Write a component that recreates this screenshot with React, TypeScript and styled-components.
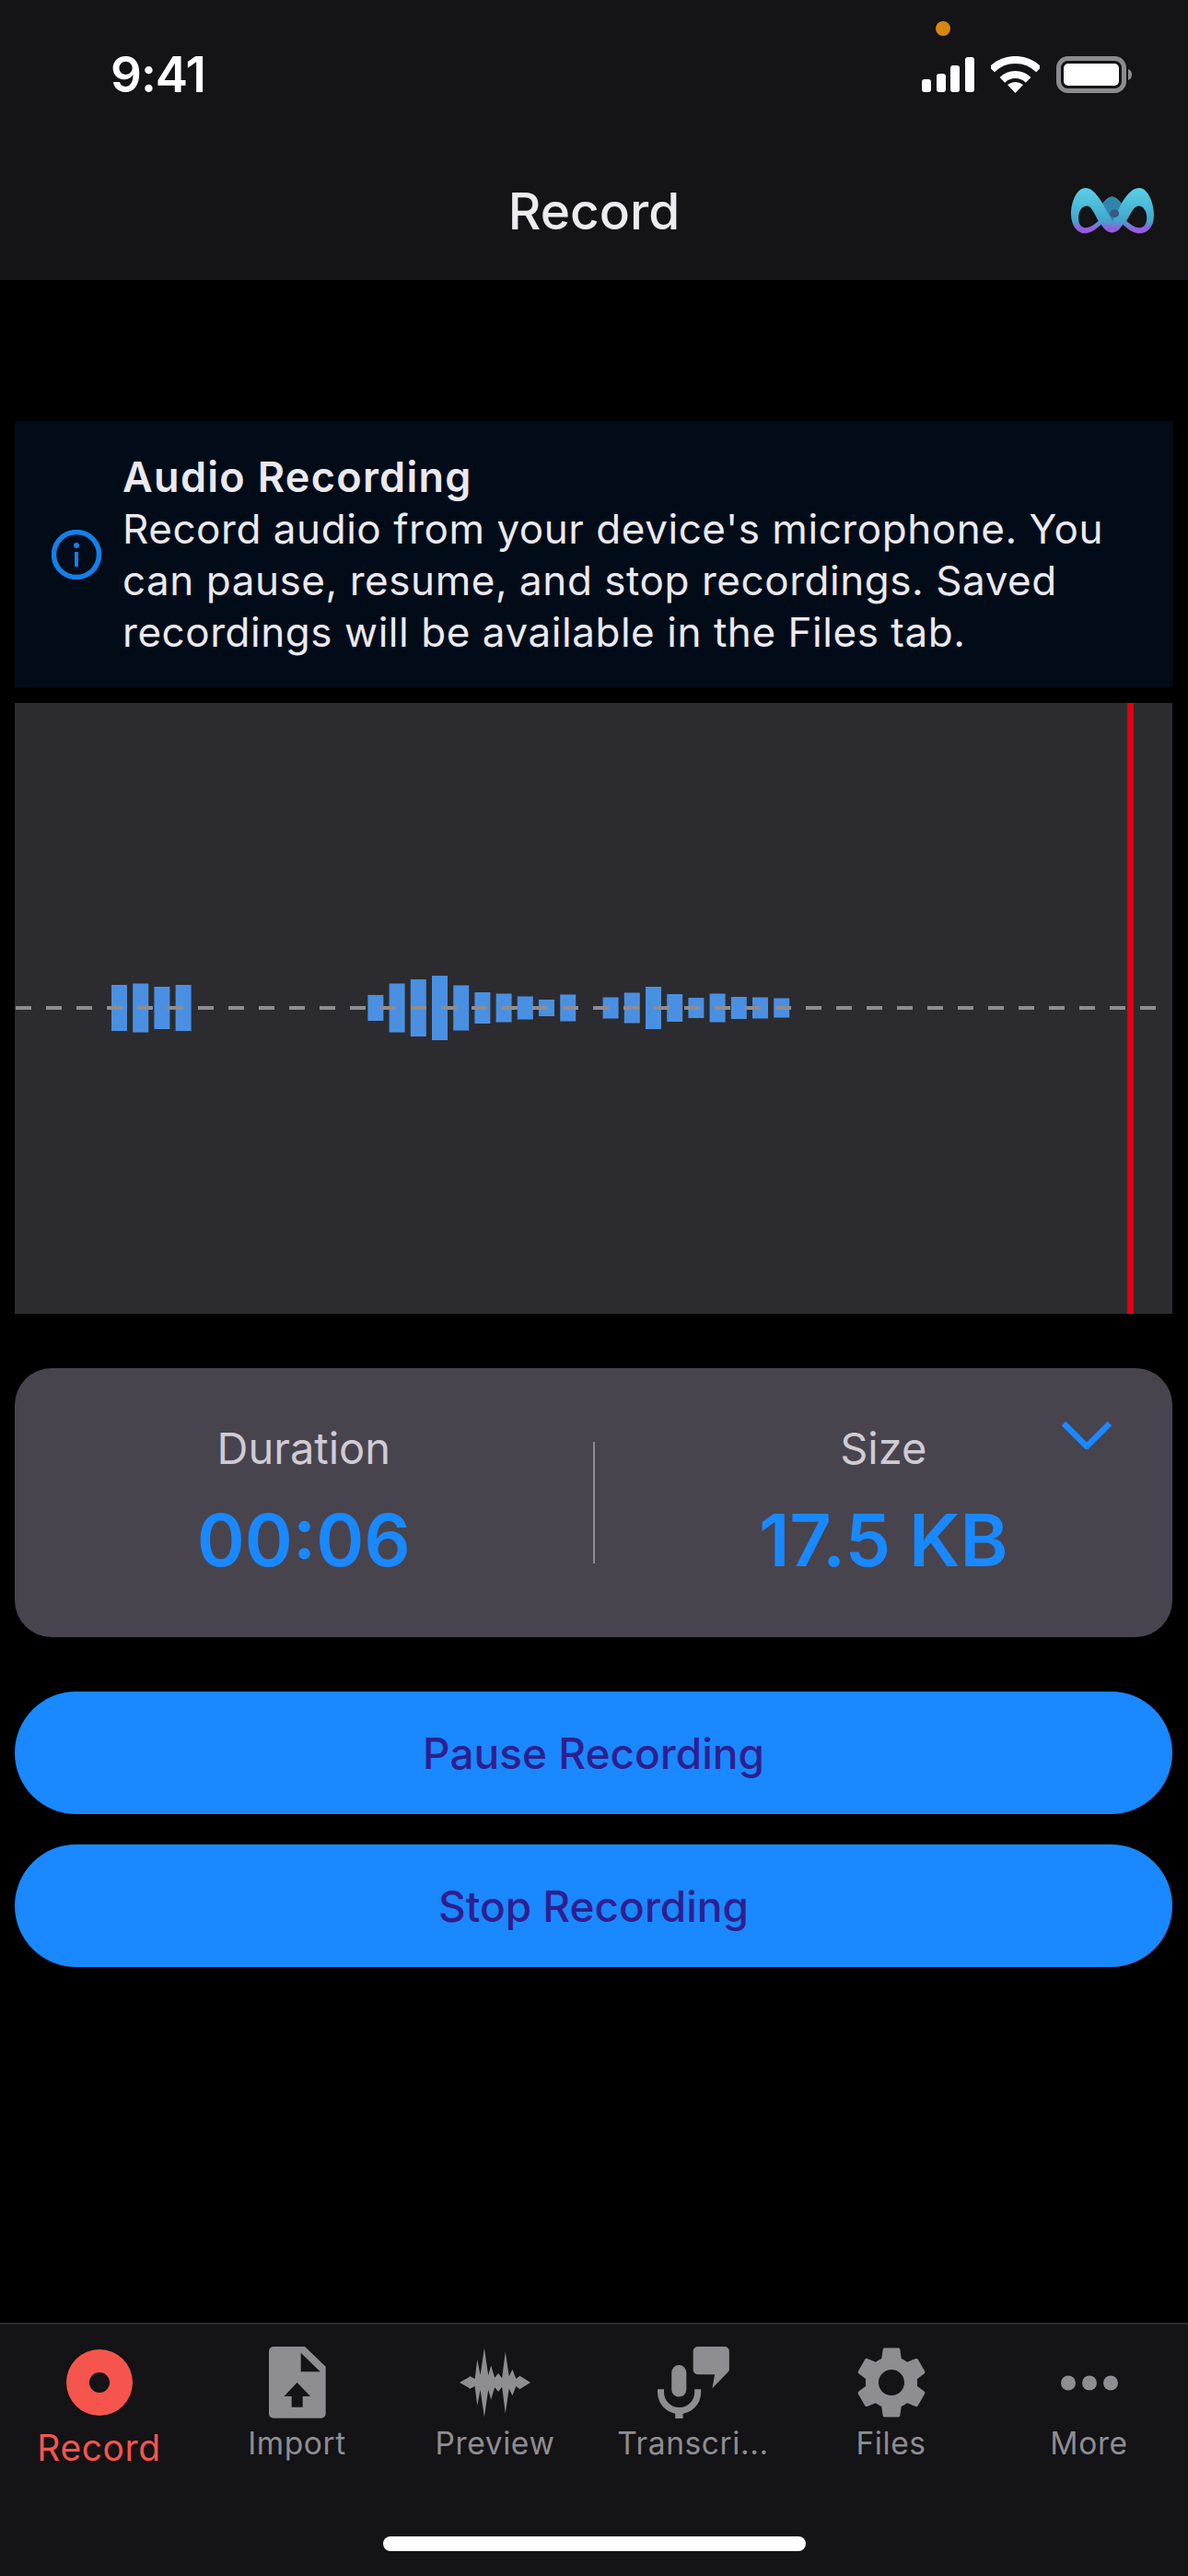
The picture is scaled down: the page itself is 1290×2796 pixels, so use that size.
import React from "react"
import styled, { createGlobalStyle } from "styled-components"

const GlobalStyle = createGlobalStyle`
    html,
    body {
        margin: 0;
        padding: 0;
        background: #000;
    }
`

const Screen = styled.div`
    width: 1290px;
    height: 2796px;
    display: flex;
    flex-direction: column;
    background: #000;
    font-family: Inter, "Liberation Sans", sans-serif;
    overflow: hidden;
`

const Header = styled.header`
    position: relative;
    height: 304px;
    flex-shrink: 0;
    background: #141316;
    display: flex;
    flex-direction: column;
`

const StatusBar = styled.div`
    display: flex;
    justify-content: space-between;
    align-items: center;
    height: 40px;
    margin-top: 61px;
    padding: 0 61px 0 120px;
`

const Clock = styled.span`
    color: #fff;
    font-size: 53px;
    font-weight: 600;
    letter-spacing: -1px;
    line-height: 40px;
`

const StatusIcons = styled.div`
    display: flex;
    align-items: center;
    gap: 18px;
`

const PrivacyDot = styled.span`
    position: absolute;
    left: 1016px;
    top: 23px;
    width: 16px;
    height: 16px;
    border-radius: 50%;
    background: #d9860f;
`

const TitleRow = styled.div`
    display: grid;
    grid-template-columns: 1fr auto 1fr;
    align-items: center;
    height: 60px;
    margin-top: 98px;
    padding: 0 37px;
`

const Title = styled.h1`
    grid-column: 2;
    margin: 0;
    color: #ebebf0;
    font-size: 55px;
    font-weight: 500;
    line-height: 60px;
`

const LogoSlot = styled.div`
    justify-self: end;
    display: flex;
`

const Content = styled.main`
    display: flex;
    flex-direction: column;
    padding: 153px 17px 0 16px;
`

const InfoBox = styled.section`
    height: 289px;
    background: #020c19;
    display: flex;
    align-items: center;
    gap: 23px;
    padding-left: 40px;
    box-sizing: border-box;
`

const InfoText = styled.div`
    color: #ebe9f0;
    font-size: 44px;
    line-height: 56px;
    letter-spacing: 0.55px;
`

const InfoTitle = styled.div`
    font-size: 45px;
    font-weight: 600;
    letter-spacing: 1.3px;
`

const WavePanel = styled.section`
    margin-top: 17px;
    height: 663px;
    background: #2c2c30;
    display: flex;
`

const StatsCard = styled.section`
    position: relative;
    margin-top: 59px;
    height: 292px;
    border-radius: 40px;
    background: #48444e;
    display: grid;
    grid-template-columns: 1fr 2px 1fr;
    align-items: center;
`

const Stat = styled.div`
    display: flex;
    flex-direction: column;
    align-items: center;
    gap: 30px;
    padding-bottom: 4px;
`

const StatLabel = styled.div`
    color: #cfcbd3;
    font-size: 47px;
    line-height: 54px;
`

const StatValue = styled.div`
    color: #1a88ff;
    font-size: 79px;
    font-weight: 600;
    line-height: 84px;
`

const Divider = styled.div`
    height: 132px;
    background: #8f8b94;
`

const ChevronButton = styled.div`
    position: absolute;
    right: 66px;
    top: 58px;
    display: flex;
`

const Actions = styled.div`
    margin-top: 59px;
    display: flex;
    flex-direction: column;
    gap: 33px;
`

const ActionButton = styled.div`
    height: 133px;
    border-radius: 67px;
    background: #1a88ff;
    color: #2e1f8f;
    font-size: 46px;
    font-weight: 500;
    display: flex;
    align-items: center;
    justify-content: center;
`

const TabBar = styled.nav`
    margin-top: auto;
    height: 275px;
    box-sizing: border-box;
    border-top: 2px solid #2a2a2c;
    background: #141316;
    display: flex;
    flex-direction: column;
`

const Tabs = styled.div`
    display: grid;
    grid-template-columns: repeat(6, 1fr);
    padding-top: 24px;
`

const Tab = styled.div`
    display: flex;
    flex-direction: column;
    align-items: center;
`

const TabIcon = styled.div`
    height: 78px;
    display: flex;
    align-items: center;
    justify-content: center;
`

const TabLabel = styled.div<{ $active?: boolean }>`
    color: ${props => (props.$active ? "#f5554d" : "#8e8d92")};
    font-size: ${props => (props.$active ? "39px" : "33.5px")};
    line-height: 40px;
    margin-top: ${props => (props.$active ? "12px" : "7px")};
    letter-spacing: 0.6px;
    white-space: nowrap;
`

const HomeIndicator = styled.div`
    width: 459px;
    height: 16px;
    border-radius: 8px;
    background: #fff;
    margin: auto auto 27px;
`

const BAR_HEIGHTS = [
    50, 53, 46, 50, 0, 0, 0, 0, 0, 0, 0, 0, 28, 53, 62, 70, 49, 34, 31, 25, 18, 29, 0, 23, 33, 46,
    30, 22, 31, 24, 23, 21,
]

const Waveform = () => (
    <svg width="1257" height="663" viewBox="0 0 1257 663">
        {BAR_HEIGHTS.map((h, i) =>
            h > 0 ? <rect key={i} x={105 + i * 23.2} y={331 - h / 2} width="17" height={h} fill="#4a90e2" /> : null
        )}
        <line x1="1" y1="331" x2="1241" y2="331" stroke="#8d8d92" strokeWidth="4" strokeDasharray="17 16" />
        <rect x="1208" y="0" width="7" height="663" fill="#e0000f" />
    </svg>
)

const SignalIcon = () => (
    <svg width="57" height="38" viewBox="0 0 57 38" fill="#fff">
        <rect x="0" y="24" width="10" height="14" rx="3" />
        <rect x="16" y="18" width="10" height="20" rx="3" />
        <rect x="31" y="9" width="10" height="29" rx="3" />
        <rect x="47" y="0" width="10" height="38" rx="3" />
    </svg>
)

const WifiIcon = () => (
    <svg width="53" height="40" viewBox="0 0 53 40" fill="none" stroke="#fff" strokeWidth="8">
        <path d="M1 14.5A36 36 0 0 1 52 14.5" />
        <path d="M12.4 25.9A20 20 0 0 1 40.6 25.9" />
        <path d="M18 31Q26.5 25 35 31L26.5 40Z" fill="#fff" stroke="none" />
    </svg>
)

const BatteryIcon = () => (
    <svg width="82" height="40" viewBox="0 0 82 40">
        <rect x="2.5" y="2.5" width="71" height="35" rx="10" fill="none" stroke="#8c8c8e" strokeWidth="5" />
        <rect x="8" y="8" width="60" height="24" rx="5" fill="#fff" />
        <path d="M78 14C81 15 82 17 82 20S81 25 78 26Z" fill="#8c8c8e" />
    </svg>
)

const Logo = () => (
    <svg width="90" height="50" viewBox="38 42 267 148">
        <defs>
            <linearGradient id="logoFill" x1="0" y1="0" x2="0" y2="1">
                <stop offset="0" stopColor="#5ad0e6" />
                <stop offset="0.72" stopColor="#41a6cc" />
                <stop offset="0.88" stopColor="#8a66dc" />
                <stop offset="1" stopColor="#a552e4" />
            </linearGradient>
        </defs>
        <path
            fill="url(#logoFill)"
            fillRule="evenodd"
            d="M85 42C108 42 124 68 140 92C150 78 160 70 170 70C180 70 190 78 200 92C216 68 232 42 258 42C285 42 305 90 305 130C305 170 282 190 255 188C234 186 218 172 205 160C195 175 185 186 170 186C155 186 145 175 135 160C122 172 106 186 85 188C60 190 38 165 38 125C38 90 55 42 85 42ZM90 100C72 100 62 118 62 138C62 158 72 170 84 170C100 170 116 158 126 148C114 128 104 100 90 100ZM255 100C240 100 230 128 216 148C228 158 242 170 258 170C272 170 282 158 282 138C282 118 272 100 255 100Z"
        />
        <path d="M140 92C150 78 160 70 170 70C180 70 190 78 200 92L172 150Z" fill="#2f86ad" />
        <ellipse cx="178" cy="124" rx="15" ry="13" fill="#3a5a7e" />
    </svg>
)

const InfoIcon = () => (
    <svg width="54" height="54" viewBox="0 0 54 54" fill="none">
        <circle cx="27" cy="27" r="24.5" stroke="#1580e8" strokeWidth="5.5" />
        <circle cx="27" cy="17" r="3" fill="#1580e8" />
        <rect x="25" y="24" width="4" height="16" fill="#1580e8" />
    </svg>
)

const Chevron = () => (
    <svg width="54" height="30" viewBox="0 0 54 30" fill="none" stroke="#1a88ff" strokeWidth="6.5">
        <path d="M2 2L27 27L52 2" />
    </svg>
)

const RecordIcon = () => (
    <svg width="72" height="72" viewBox="0 0 72 72">
        <path
            fill="#f5554d"
            fillRule="evenodd"
            d="M36 0a36 36 0 1 0 0 72a36 36 0 1 0 0-72ZM36 25a11 11 0 1 1 0 22a11 11 0 1 1 0-22Z"
        />
    </svg>
)

const ImportIcon = () => (
    <svg width="62" height="78" viewBox="0 0 186 234">
        <path
            fill="#8e8d92"
            fillRule="evenodd"
            d="M15 0H117L185 65V218a15 15 0 0 1-15 15H15a15 15 0 0 1-15-15V15a15 15 0 0 1 15-15ZM104 20V82H167ZM92 117L49 162H74V197H110V162H135Z"
        />
    </svg>
)

// outline of the upper half, the lower half is mirrored from it
const PREVIEW_POINTS: [number, number][] = [
    [0, 0], [35, 20], [50, 12], [58, 76], [68, 24], [81, 113], [94, 24], [103, 56], [115, 16],
    [127, 30], [139, 14], [150, 101], [162, 20], [173, 43], [185, 12], [197, 22], [232, 0],
]

const previewPath = [
    ...PREVIEW_POINTS.map(([x, d]) => `${x},${113 - d}`),
    ...[...PREVIEW_POINTS].reverse().map(([x, d]) => `${x},${113 + d}`),
].join(" ")

const PreviewIcon = () => (
    <svg width="77" height="76" viewBox="0 0 232 226">
        <polygon points={previewPath} fill="#8e8d92" />
    </svg>
)

const TranscribeIcon = () => (
    <svg width="78" height="78" viewBox="40 35 232 233" fill="#8e8d92">
        <path d="M170 35H257a15 15 0 0 1 15 15V110a15 15 0 0 1-4 8L217 170L225 125H170a15 15 0 0 1-15-15V50a15 15 0 0 1 15-15Z" />
        <rect x="85" y="95" width="48" height="103" rx="24" />
        <path d="M50 173V183A60 60 0 0 0 170 183V173" fill="none" stroke="#8e8d92" strokeWidth="21" />
        <rect x="97" y="235" width="25" height="33" />
    </svg>
)

const GearIcon = () => (
    <svg width="78" height="78" viewBox="2 2 20 20">
        <path
            fill="#8e8d92"
            d="M19.14 12.94c.04-.3.06-.61.06-.94 0-.32-.02-.64-.07-.94l2.03-1.58c.18-.14.23-.41.12-.61l-1.92-3.32c-.12-.22-.37-.29-.59-.22l-2.39.96c-.5-.38-1.03-.7-1.62-.94l-.36-2.54c-.04-.24-.24-.41-.48-.41h-3.84c-.24 0-.43.17-.47.41l-.36 2.54c-.59.24-1.13.57-1.62.94l-2.39-.96c-.22-.08-.47 0-.59.22L2.74 8.87c-.12.21-.08.47.12.61l2.03 1.58c-.05.3-.09.63-.09.94s.02.64.07.94l-2.03 1.58c-.18.14-.23.41-.12.61l1.92 3.32c.12.22.37.29.59.22l2.39-.96c.5.38 1.03.7 1.62.94l.36 2.54c.05.24.24.41.48.41h3.84c.24 0 .44-.17.47-.41l.36-2.54c.59-.24 1.13-.56 1.62-.94l2.39.96c.22.08.47 0 .59-.22l1.92-3.32c.12-.22.07-.47-.12-.61l-2.01-1.58zM12 15.6c-1.98 0-3.6-1.62-3.6-3.6s1.62-3.6 3.6-3.6 3.6 1.62 3.6 3.6-1.62 3.6-3.6 3.6z"
        />
    </svg>
)

const MoreIcon = () => (
    <svg width="62" height="17" viewBox="0 0 62 17" fill="#8e8d92">
        <circle cx="8" cy="8.5" r="8" />
        <circle cx="31" cy="8.5" r="8" />
        <circle cx="54" cy="8.5" r="8" />
    </svg>
)

const TABS = [
    { label: "Record", icon: <RecordIcon />, active: true },
    { label: "Import", icon: <ImportIcon /> },
    { label: "Preview", icon: <PreviewIcon /> },
    { label: "Transcri...", icon: <TranscribeIcon /> },
    { label: "Files", icon: <GearIcon /> },
    { label: "More", icon: <MoreIcon /> },
]

const App = () => {
    return (
        <Screen>
            <GlobalStyle />
            <Header>
                <PrivacyDot />
                <StatusBar>
                    <Clock>9:41</Clock>
                    <StatusIcons>
                        <SignalIcon />
                        <WifiIcon />
                        <BatteryIcon />
                    </StatusIcons>
                </StatusBar>
                <TitleRow>
                    <Title>Record</Title>
                    <LogoSlot>
                        <Logo />
                    </LogoSlot>
                </TitleRow>
            </Header>
            <Content>
                <InfoBox>
                    <InfoIcon />
                    <InfoText>
                        <InfoTitle>Audio Recording</InfoTitle>
                        Record audio from your device's microphone. You
                        <br />
                        can pause, resume, and stop recordings. Saved
                        <br />
                        recordings will be available in the Files tab.
                    </InfoText>
                </InfoBox>
                <WavePanel>
                    <Waveform />
                </WavePanel>
                <StatsCard>
                    <Stat>
                        <StatLabel>Duration</StatLabel>
                        <StatValue>00:06</StatValue>
                    </Stat>
                    <Divider />
                    <Stat>
                        <StatLabel>Size</StatLabel>
                        <StatValue>17.5 KB</StatValue>
                    </Stat>
                    <ChevronButton>
                        <Chevron />
                    </ChevronButton>
                </StatsCard>
                <Actions>
                    <ActionButton>Pause Recording</ActionButton>
                    <ActionButton>Stop Recording</ActionButton>
                </Actions>
            </Content>
            <TabBar>
                <Tabs>
                    {TABS.map(tab => (
                        <Tab key={tab.label}>
                            <TabIcon>{tab.icon}</TabIcon>
                            <TabLabel $active={tab.active}>{tab.label}</TabLabel>
                        </Tab>
                    ))}
                </Tabs>
                <HomeIndicator />
            </TabBar>
        </Screen>
    )
}

export default App
